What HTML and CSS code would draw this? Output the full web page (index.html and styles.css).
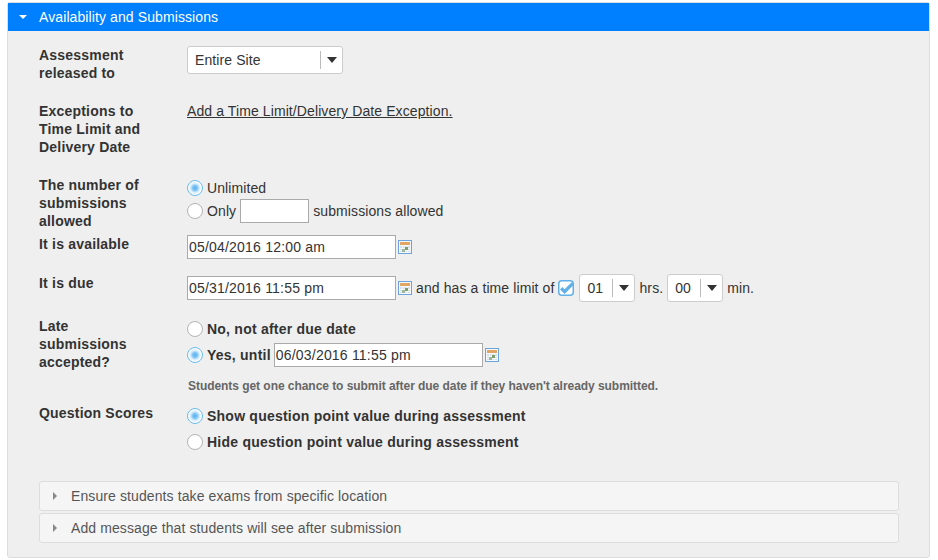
FILE: index.html
```html
<!DOCTYPE html>
<html lang="en">
<head>
<meta charset="utf-8">
<title>Availability and Submissions</title>
<link rel="stylesheet" href="styles.css">
</head>
<body>
<svg class="defs" width="0" height="0" aria-hidden="true">
  <symbol id="cal" viewBox="0 0 14 14">
    <rect x="0.5" y="0.5" width="13" height="13" fill="#f4f8fc" stroke="#6fa3dc"/>
    <rect x="2" y="2" width="10" height="3" fill="#e2a562"/>
    <rect x="2" y="6" width="10" height="6" fill="#d5e0ea"/>
    <path d="M2 8.5H12M2 10.5H12M4.5 6V12M7 6V12M9.5 6V12" stroke="#fff" stroke-width="0.7" fill="none"/>
    <rect x="7" y="7" width="3" height="3" fill="#7f9f6a"/>
    <rect x="4" y="9" width="3" height="3" fill="#9fb79a"/>
  </symbol>
</svg>
<section class="panel">
  <h2 class="panel-head"><span class="caret-down"></span>Availability and Submissions</h2>
  <div class="panel-body">
    <div class="row row-release">
      <div class="label">Assessment<br>released to</div>
      <div class="control">
        <div class="select select-wide"><span class="select-value">Entire Site</span><span class="select-arrow"></span></div>
      </div>
    </div>
    <div class="row row-except">
      <div class="label">Exceptions to<br>Time Limit and<br>Delivery Date</div>
      <div class="control"><a class="link" href="#">Add a Time Limit/Delivery Date Exception.</a></div>
    </div>
    <div class="row row-number">
      <div class="label">The number of<br>submissions<br>allowed</div>
      <div class="control stack-sub">
        <div class="line line-unlimited"><span class="radio on"></span>Unlimited</div>
        <div class="line"><span class="radio"></span>Only<span class="input input-small"></span>submissions allowed</div>
      </div>
    </div>
    <div class="row row-avail">
      <div class="label">It is available</div>
      <div class="control line"><span class="input input-date">05/04/2016 12:00 am</span><svg class="cal"><use href="#cal"/></svg></div>
    </div>
    <div class="row row-due">
      <div class="label">It is due</div>
      <div class="control line">
        <span class="input input-date">05/31/2016 11:55 pm</span><svg class="cal"><use href="#cal"/></svg>
        <span class="after-cal">and has a time limit of</span>
        <svg class="check" viewBox="0 0 16 16"><rect x="0.75" y="0.75" width="14.5" height="14.5" rx="3" fill="#fff" stroke="#62b0e8" stroke-width="1.5"/><path d="M3.2 8.2 L6.6 11.6 L14.8 3.4" fill="none" stroke="#62b0e8" stroke-width="3.4"/></svg>
        <div class="select select-small"><span class="select-value">01</span><span class="select-arrow"></span></div>
        <span class="unit">hrs.</span>
        <div class="select select-small"><span class="select-value">00</span><span class="select-arrow"></span></div>
        <span class="unit">min.</span>
      </div>
    </div>
    <div class="row row-late">
      <div class="label">Late<br>submissions<br>accepted?</div>
      <div class="control strong">
        <div class="line line-no"><span class="radio"></span>No, not after due date</div>
        <div class="line"><span class="radio on"></span>Yes, until<span class="input input-date plain">06/03/2016 11:55 pm</span><svg class="cal"><use href="#cal"/></svg></div>
        <p class="note">Students get one chance to submit after due date if they haven't already submitted.</p>
      </div>
    </div>
    <div class="row row-scores">
      <div class="label">Question Scores</div>
      <div class="control strong">
        <div class="line line-show"><span class="radio on"></span>Show question point value during assessment</div>
        <div class="line"><span class="radio"></span>Hide question point value during assessment</div>
      </div>
    </div>
    <div class="accordion">
      <div class="acc-item"><span class="caret-right"></span>Ensure students take exams from specific location</div>
      <div class="acc-item"><span class="caret-right"></span>Add message that students will see after submission</div>
    </div>
  </div>
</section>
</body>
</html>
```
FILE: styles.css
```css
* { box-sizing: border-box; }
html, body { margin: 0; padding: 0; background: #fff; }
body {
  width: 938px;
  height: 560px;
  padding: 2px 8px 0 7px;
  overflow: hidden;
  font-family: "Liberation Sans", Arial, sans-serif;
  font-size: 14px;
  letter-spacing: 0.1px;
  color: #333;
}
.defs { position: absolute; }
.panel {
  width: 923px;
  height: 556px;
  border: 1px solid #ddd;
  border-radius: 3px;
  background: #efefef;
}
.panel-head {
  display: flex;
  align-items: center;
  height: 28px;
  margin: 0;
  padding-left: 11px;
  background: #0080ff;
  color: #fff;
  font-size: 14px;
  font-weight: normal;
}
.caret-down {
  width: 0;
  height: 0;
  margin-right: 12px;
  border-left: 4px solid transparent;
  border-right: 4px solid transparent;
  border-top: 4px solid #fff;
}
.panel-body { padding: 15px 30px 0 31px; }
.row { display: flex; align-items: flex-start; }
.label {
  flex: 0 0 148px;
  font-weight: bold;
  line-height: 18px;
  letter-spacing: 0.2px;
}
.control { min-width: 0; line-height: 18px; }
.line { display: flex; align-items: center; }
.strong { font-weight: bold; letter-spacing: 0.23px; }

.row-release { height: 56px; }
.row-except { height: 74px; }
.row-number { height: 59px; }
.row-avail { height: 39px; }
.row-due { height: 43px; }
.row-late { height: 87px; }
.row-scores { height: 77px; }

.select {
  display: flex;
  align-items: center;
  height: 28px;
  background: #fff;
  border: 1px solid #ccc;
  border-radius: 3px;
  font-weight: normal;
}
.select-wide { width: 156px; }
.select-small { width: 56px; }
.select-value {
  flex: 1;
  height: 18px;
  padding-left: 7px;
  border-right: 1px solid #bbb;
  line-height: 18px;
}
.select-arrow {
  width: 0;
  height: 0;
  margin: 0 5px 0 6px;
  border-left: 5.5px solid transparent;
  border-right: 5.5px solid transparent;
  border-top: 6px solid #333;
}
.link { color: #333; text-decoration: underline; }

.radio {
  flex: none;
  width: 16px;
  height: 16px;
  margin-right: 4px;
  background: #fff;
  border: 1px solid #b4b4b4;
  border-radius: 50%;
}
.radio.on {
  border-color: #68bcf0;
  background: radial-gradient(circle, #58b0f0 0, #80c6f4 2.5px, #d6ecfb 4.5px, #fff 6.5px);
}
.input {
  flex: none;
  display: block;
  height: 24px;
  background: #fff;
  border: 1px solid #aaa;
  font-weight: normal;
  line-height: 22px;
  padding-left: 1px;
  letter-spacing: 0.2px;
}
.input-small { width: 69px; margin: 0 4px 0 4px; }
.input-date { width: 209px; }
.input-date.plain { margin-left: 3px; }
.cal { flex: none; width: 14px; height: 14px; margin-left: 2px; }
.after-cal { margin-left: 4px; }
.check { flex: none; width: 16px; height: 16px; margin: 0 5px 0 4px; }
.unit { margin: 0 4px; }
.line-unlimited { height: 18px; margin-top: 3px; margin-bottom: 2px; }
.stack-sub .line:last-child { height: 24px; }
.line-no { height: 18px; margin-top: 3px; margin-bottom: 5px; }
.note {
  margin: 11px 0 0 1px;
  font-size: 12px;
  line-height: 16px;
  color: #666;
  letter-spacing: -0.05px;
}
.line-show { height: 18px; margin-top: 3px; margin-bottom: 8px; }
.accordion { display: flex; flex-direction: column; gap: 2px; }
.acc-item {
  display: flex;
  align-items: center;
  height: 30px;
  padding-left: 13px;
  background: #f5f5f5;
  border: 1px solid #ddd;
  border-radius: 3px;
  color: #555;
}
.caret-right {
  width: 0;
  height: 0;
  margin-right: 14px;
  border-top: 4px solid transparent;
  border-bottom: 4px solid transparent;
  border-left: 4px solid #888;
}
```
